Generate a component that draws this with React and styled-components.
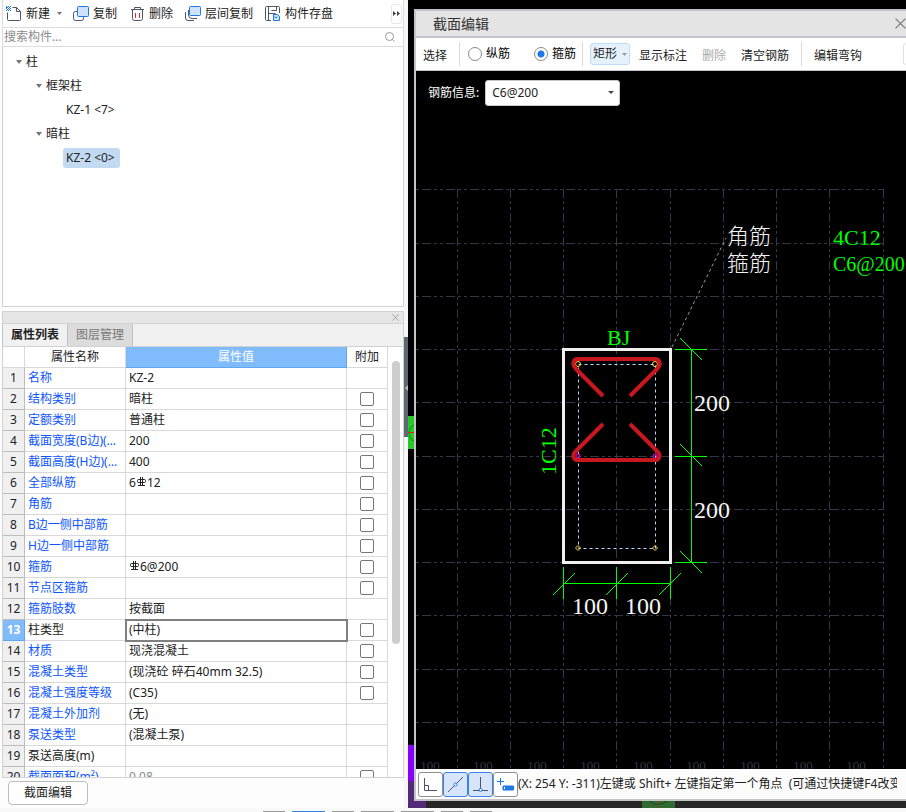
import React, { useState } from "react";
import styled, { createGlobalStyle, css } from "styled-components";

const GlobalStyle = createGlobalStyle`
  * { box-sizing: border-box; }
  body {
    margin: 0;
    background: #fff;
    color: #222;
    font: 12px/20px "Noto Sans", "Noto Sans CJK SC", sans-serif;
    overflow: hidden;
  }
  button, input, select { font: inherit; color: inherit; }
`;

const Page = styled.div`
  display: flex;
  flex-direction: column;
  height: 100vh;
`;

const Workspace = styled.main`
  display: flex;
  flex: 1;
  min-height: 0;
`;

const Sidebar = styled.aside`
  display: flex;
  flex: 0 0 404px;
  flex-direction: column;
  padding-left: 2px;
  background: #fdfdfd;
`;

const Toolbar = styled.div`
  display: flex;
  align-items: center;
  height: 28px;
  padding-left: 3px;
  background: #fff;
  border: solid #dcdcdc;
  border-width: 0 1px 1px 1px;
`;

const ToolButton = styled.button`
  display: flex;
  align-items: center;
  gap: 4px;
  margin-right: ${(p) => p.$space}px;
  padding: 0;
  border: 0;
  background: none;
  white-space: nowrap;
`;

const OverflowButton = styled.button`
  display: grid;
  place-items: center;
  width: 11px;
  height: 20px;
  margin-left: auto;
  margin-right: 1px;
  padding: 0;
  border: 1px solid #e6e6e6;
  border-radius: 3px;
  background: #fff;
`;

const SearchBar = styled.label`
  display: flex;
  align-items: center;
  height: 19px;
  padding: 0 8px 0 1px;
  border: solid #dcdcdc;
  border-width: 0 1px 1px 1px;
  background: #fff;
`;

const SearchInput = styled.input`
  flex: 1;
  min-width: 0;
  height: 18px;
  padding: 0;
  border: 0;
  outline: 0;
  background: none;
  &::placeholder { color: #8c8c8c; opacity: 1; }
`;

const Tree = styled.ul`
  flex: 0 0 260px;
  margin: 0;
  padding: 3px 0 0 13px;
  list-style: none;
  border: solid #d2d2d2;
  border-width: 0 1px 1px 1px;
  background: #fff;
`;

const Branch = styled.ul`
  margin: 0;
  padding: 0 0 0 20px;
  list-style: none;
`;

const TreeNode = styled.button`
  display: flex;
  align-items: center;
  gap: 4px;
  height: 24px;
  padding: 0;
  border: 0;
  background: none;
`;

const TreeLeaf = styled.button`
  display: block;
  height: 20px;
  margin: 2px 0 2px 7px;
  padding: 0 5px 0 3px;
  line-height: 20px;
  border: 0;
  border-radius: 3px;
  background: ${(p) => (p.$active ? "#c2daf2" : "none")};
`;

const PanelTitle = styled.div`
  display: flex;
  justify-content: flex-end;
  align-items: center;
  flex: 0 0 12px;
  margin-top: 4px;
  padding-right: 4px;
  background: #e6e6e6;
  border: solid #d2d2d2;
  border-width: 1px 1px 0 1px;
`;

const IconButton = styled.button`
  display: grid;
  place-items: center;
  padding: 0;
  border: 0;
  background: none;
`;

const Tabs = styled.div`
  display: flex;
  flex: 0 0 24px;
  background: #f1f1f1;
  border: solid #d2d2d2;
  border-width: 1px 1px 1px 0;
`;

const Tab = styled.button`
  padding: 0 8px;
  border: solid #c3c3cb;
  border-width: 0 1px 0 ${(p) => (p.$active ? 1 : 0)}px;
  background: ${(p) => (p.$active ? "#f1f1f1" : "#dcdcdc")};
  color: ${(p) => (p.$active ? "#222" : "#777")};
  font-weight: ${(p) => (p.$active ? 600 : 400)};
`;

const PropertyArea = styled.div`
  display: flex;
  flex: 1;
  min-height: 0;
  overflow: hidden;
  border: solid #d2d2d2;
  border-width: 0 1px 1px 1px;
  background: #fff;
`;

const TableWrap = styled.div`
  flex: 1;
  min-width: 0;
`;

const Properties = styled.table`
  width: 100%;
  table-layout: fixed;
  border-collapse: separate;
  border-spacing: 0;
`;

const cell = css`
  height: 21px;
  overflow: hidden;
  line-height: 20px;
  white-space: nowrap;
  border: solid #d9d9d9;
  border-width: 0 1px 1px 0;
`;

const HeadCell = styled.th`
  ${cell}
  width: ${(p) => (p.$width ? p.$width + "px" : "auto")};
  padding: 0;
  font-weight: 400;
  ${(p) => p.$active && "background: #80bbfb; color: #fff; border-color: #61a5ee;"}
`;

const NumberCell = styled.th`
  ${cell}
  padding: 0;
  font-weight: 400;
  background: #f0f0f0;
  border-color: #bdbdbd;
  ${(p) => p.$active && "background: #80bbfb; color: #fff; border-color: #61a5ee; font-weight: 700;"}
`;

const NameCell = styled.td`
  ${cell}
  padding: 0 3px;
  text-overflow: ellipsis;
  color: ${(p) => (p.$plain ? "#222" : "#0d55ff")};
`;

const ValueCell = styled.td`
  ${cell}
  padding: 0 3px;
  color: ${(p) => (p.$muted ? "#888" : "#222")};
  ${(p) => p.$active && "outline: 2px solid #7f7f7f; outline-offset: -1px;"}
`;

const TickCell = styled.td`
  ${cell}
  padding: 0;
`;

const Tick = styled.input`
  appearance: none;
  display: block;
  width: 14px;
  height: 14px;
  margin: 0 auto;
  border: 1px solid #777;
  border-radius: 2px;
  background: #fff;
  &:checked { background: #2878e0; }
`;

const ScrollTrack = styled.div`
  flex: 0 0 15px;
  padding: 14px 3px 0 4px;
`;

const ScrollThumb = styled.div`
  height: 283px;
  border-radius: 4px;
  background: #cdcdcd;
`;

const SidebarFooter = styled.div`
  flex: 0 0 30px;
  padding: 3px 0 0 6px;
`;

const EditButton = styled.button`
  width: 80px;
  height: 24px;
  padding: 0;
  line-height: 22px;
  border: 1px solid #bcbcbc;
  border-radius: 4px;
  background: #fff;
`;

const Splitter = styled.div`
  display: flex;
  flex: 0 0 4px;
  flex-direction: column;
  padding-top: 337px;
  background: #f6f6f8;
`;

const SplitterHandle = styled.button`
  width: 4px;
  height: 100px;
  padding: 0;
  border: 0;
  background: #5e6875;
`;

const Stage = styled.section`
  position: relative;
  display: flex;
  flex: 1;
  min-width: 0;
  padding: 9px 0 7px 6px;
  background: #000;
`;

const Backdrop = styled.svg`
  position: absolute;
  inset: 0;
  width: 100%;
  height: 100%;
`;

const Dialog = styled.section`
  position: relative;
  display: flex;
  flex: 1;
  flex-direction: column;
  min-width: 0;
  border: solid #c3c4c8;
  border-width: 2px 0 2px 2px;
`;

const DialogTitle = styled.header`
  display: flex;
  align-items: center;
  justify-content: space-between;
  flex: 0 0 27px;
  padding-left: 17px;
  background: #e4e4e4;
  border-bottom: 2px solid #c3c3cb;
`;

const Heading = styled.h2`
  margin: 0;
  font-size: 14px;
  font-weight: 400;
  color: #333;
`;

const DialogTools = styled.div`
  display: flex;
  align-items: center;
  flex: 0 0 33px;
  padding: 0 1px 0 7px;
  background: #fff;
  border-bottom: 1px solid #c3c3cb;
  white-space: nowrap;
`;

const TextButton = styled.button`
  padding: 3px 0 0;
  margin-right: ${(p) => p.$space}px;
  border: 0;
  background: none;
  color: ${(p) => (p.disabled ? "#aaa" : "#222")};
`;

const Separator = styled.span`
  width: 1px;
  height: 24px;
  margin-right: ${(p) => p.$space}px;
  background: #dadada;
`;

const RadioLabel = styled.label`
  display: flex;
  align-items: center;
  gap: 4px;
  margin-right: ${(p) => p.$space}px;
  color: #000;
`;

const Radio = styled.input`
  appearance: none;
  width: 14px;
  height: 14px;
  margin: 0;
  border: 1px solid #888;
  border-radius: 50%;
  background: #fff;
  &:checked { background: radial-gradient(circle, #1f78e8 3px, #fff 4px); }
`;

const ShapeButton = styled.button`
  display: flex;
  align-items: center;
  gap: 5px;
  height: 22px;
  margin-right: 9px;
  padding: 0 2px;
  border: 1px solid #bfdcf5;
  border-radius: 3px;
  background: #e5f2fd;
`;

const MoreButton = styled.button`
  width: 8px;
  height: 22px;
  margin: 0 -6px 0 auto;
  padding: 0;
  border: 1px solid #e0e0e0;
  border-radius: 3px;
  background: #fff;
`;

const Canvas = styled.div`
  position: relative;
  flex: 1;
  min-height: 0;
  overflow: hidden;
  background: #000;
`;

const Drawing = styled.svg`
  position: absolute;
  inset: 0;
  width: 100%;
  height: 100%;
`;

const RebarField = styled.label`
  position: relative;
  display: inline-flex;
  align-items: center;
  gap: 6px;
  margin: 9px 0 0 12px;
  color: #fff;
`;

const RebarSelect = styled.select`
  appearance: none;
  width: 135px;
  height: 26px;
  padding: 0 6px;
  border: 1px solid #c9c9c9;
  border-radius: 3px;
  color: #222;
  background: #fff url("data:image/svg+xml,%3Csvg xmlns='http://www.w3.org/2000/svg' width='6' height='4'%3E%3Cpath d='M0 0h6L3 3z' fill='%23444'/%3E%3C/svg%3E") no-repeat right 5px center;
`;

const DialogStatus = styled.footer`
  display: flex;
  align-items: center;
  flex: 0 0 30px;
  padding: 0 9px 0 2px;
  background: #fcfcfc;
  color: #222;
`;

const ModeButton = styled.button`
  display: grid;
  place-items: center;
  flex: 0 0 25px;
  height: 25px;
  padding: 0;
  border: 1px solid ${(p) => (p.$active ? "#3c82e6" : "#8f8f8f")};
  border-radius: 3px;
  background: ${(p) => (p.$active ? "#d6e5fb" : "#fff")};
`;

const Hint = styled.span`
  flex: 1;
  min-width: 0;
  overflow: hidden;
  white-space: nowrap;
`;

const BottomStrip = styled.footer`
  display: flex;
  align-items: flex-end;
  gap: 7px;
  flex: 0 0 4px;
  padding-left: 263px;
  background: #f8f8f8;
`;

const StripItem = styled.span`
  width: ${(p) => p.$width}px;
  height: 1px;
  background: ${(p) => (p.$active ? "#3c82e6" : "#999")};
`;

const RebarMark = styled.svg`
  margin: 0 1px;
  vertical-align: 1px;
`;

const ink = "#4d5566";
const blue = "#1f78e8";

const NewIcon = () => (
  <svg width="16" height="16" viewBox="0 0 16 16" fill="none">
    <path d="M6.500 1.500h4l4 4v8a1 1 0 0 1-1 1h-11a1 1 0 0 1-1-1v-7M10.500 1.500v4h4" stroke={ink} />
    <path d="M0 0h1v1h1v1H0zM2 0h1v1H2zM4 0h1v1H4zM1 1h1v1H1zM3 1h1v1H3zM0 2h1v1H0zM2 2h1v1H2zM4 2h1v1H4zM1 3h1v1H1zM3 3h1v1H3zM0 4h1v1H0zM2 4h1v1H2zM4 4h1v1H4z" fill={blue} />
  </svg>
);

const CopyIcon = () => (
  <svg width="16" height="16" viewBox="0 0 16 16" fill="none">
    <path d="M4 5.500H2.500a2 2 0 0 0-2 2v5a2 2 0 0 0 2 2h6a2 2 0 0 0 2-2V11" stroke={ink} />
    <rect x="4.500" y=".5" width="11" height="10" rx="1" fill="#cfe2fc" stroke={blue} />
  </svg>
);

const TrashIcon = () => (
  <svg width="15" height="16" viewBox="0 0 15 16" fill="none">
    <path d="M1 3.500h13M4.500 3.500v-2h6v2M2.500 3.500v9a2 2 0 0 0 2 2h6a2 2 0 0 0 2-2v-9" stroke={ink} />
    <path d="M5.500 7v5M9.500 7v5" stroke="#d62b35" />
  </svg>
);

const LayersIcon = () => (
  <svg width="16" height="16" viewBox="0 0 16 16" fill="none">
    <path d="M.5 6v6q0 2.500 2.500 2.500h6M3.500 4v5q0 3.500 3.500 3.500h5" stroke={ink} />
    <rect x="4.500" y=".5" width="11" height="9" rx="1" fill="#cfe2fc" stroke={blue} />
  </svg>
);

const SaveIcon = () => (
  <svg width="16" height="16" viewBox="0 0 16 16" fill="none">
    <path d="M6 14.500H1.500a1 1 0 0 1-1-1v-12a1 1 0 0 1 1-1h12a1 1 0 0 1 1 1V7M3.500 .5v14M11.500 .5v4h-5M3.500 7.500h7" stroke={ink} />
    <path d="M8.500 8.500h4l2 2v4h-6z" fill="#cfe2fc" stroke={blue} />
    <path d="M9.500 10.500l1.500 1.500 1.500-1.500" stroke={blue} />
  </svg>
);

const Caret = ({ color = "#777" }) => (
  <svg width="5" height="3" viewBox="0 0 5 3"><path d="M0 0h5L2.500 3z" fill={color} /></svg>
);

const TreeCaret = () => (
  <svg width="6" height="4" viewBox="0 0 6 4"><path d="M0 0h6L3 4z" fill="#777" /></svg>
);

const SearchIcon = () => (
  <svg width="10" height="10" viewBox="0 0 10 10" fill="none" stroke="#999">
    <circle cx="4.500" cy="4.500" r="4" /><path d="M7.500 7.500l2 2" />
  </svg>
);

const Cross = ({ size, color }) => (
  <svg width={size} height={size} viewBox="0 0 10 10"><path d="M.5 .5l9 9M9.500 .5l-9 9" stroke={color} /></svg>
);

const RebarSymbol = () => (
  <RebarMark width="9" height="9" viewBox="0 0 9 9" fill="none" stroke="#222">
    <path d="M3.500 0v8M5.500 0v8M1 8.500h7" />
    <rect x=".5" y="2.500" width="8" height="3" rx="1" />
  </RebarMark>
);

const rows = [
  ["名称", "KZ-2", false],
  ["结构类别", "暗柱", true],
  ["定额类别", "普通柱", true],
  ["截面宽度(B边)(mm)", "200", true],
  ["截面高度(H边)(mm)", "400", true],
  ["全部纵筋", <>6<RebarSymbol />12</>, true],
  ["角筋", "", true],
  ["B边一侧中部筋", "", true],
  ["H边一侧中部筋", "", true],
  ["箍筋", <><RebarSymbol />6@200</>, true],
  ["节点区箍筋", "", true],
  ["箍筋肢数", "按截面", false],
  ["柱类型", "(中柱)", true],
  ["材质", "现浇混凝土", true],
  ["混凝土类型", "(现浇砼 碎石40mm 32.5)", true],
  ["混凝土强度等级", "(C35)", true],
  ["混凝土外加剂", "(无)", false],
  ["泵送类型", "(混凝土泵)", false],
  ["泵送高度(m)", "", false],
  ["截面面积(m²)", "0.08", true],
];
const plainRows = [13, 19];

const gridX = [41, 94, 147, 200, 254, 307, 360, 413, 467];
const gridY = [118, 172, 225, 278, 331, 385, 438, 491, 544, 598, 651];

function SectionDrawing() {
  return (
    <Drawing>
      <g stroke="#333845" strokeDasharray="9 3 3 3 3 3" shapeRendering="crispEdges">
        {gridY.map((y) => <path key={y} d={`M0 ${y}.5H467`} strokeDashoffset="18" />)}
        {gridX.map((x) => <path key={x} d={`M${x}.5 118V697`} />)}
      </g>
      <g fill="#333845" fontFamily="Liberation Serif, serif" fontSize="13" textAnchor="middle">
        {[14, 67, 121, 174, 227, 280, 334, 387, 440].map((x) => <text key={x} x={x} y="699">100</text>)}
      </g>
      <path d="M256 276L310 167" stroke="#999" strokeDasharray="3 3" fill="none" />
      <rect x="147.500" y="278.500" width="107" height="213" fill="none" stroke="#f0f0f0" strokeWidth="3" />
      <rect x="162.500" y="293.500" width="77" height="184" fill="none" stroke="#b9d4ff" strokeDasharray="3 3" />
      <g fill="none" stroke="#ffd93b">
        <circle cx="162" cy="293" r="2.500" />
        <circle cx="239" cy="293" r="2.500" />
        <path d="M162 474.500l2.500 2.500-2.500 2.500-2.500-2.500zM239 474.500l2.500 2.500-2.500 2.500-2.500-2.500z" />
      </g>
      <g fill="none" stroke="#f0f">
        <circle cx="162" cy="385" r="2" />
        <circle cx="239" cy="385" r="2" />
      </g>
      <g fill="none" stroke="#c8171e" strokeWidth="4" strokeLinejoin="round">
        <path d="M187 325L160 298Q156 293 158 290Q159 288 162 288H239Q242 288 243 290Q245 294 241 298L214 325" />
        <path d="M187 353L160 380Q156 384 158 387Q159 389 162 389H239Q242 389 243 387Q245 384 241 380L214 353" />
      </g>
      <g stroke="#0f0" fill="none">
        <path d="M275.500 278V491M259 278.500H291M259 385.500H291M259 491.500H291M147.500 496V528M200.500 496V528M254.500 496V528M147 512.500H255" />
        <path d="M264 267l22 22M264 373l22 22M264 480l22 22M137 524l22-22M190 524l22-22M243 524l22-22" />
      </g>
      <g fill="#f4f4f4" fontFamily="Liberation Serif, serif" fontSize="24">
        <text x="278" y="340">200</text>
        <text x="278" y="447">200</text>
        <text x="156" y="543">100</text>
        <text x="209" y="543">100</text>
      </g>
      <g fill="#f4f4f4" fontFamily="Liberation Serif, Noto Sans CJK SC, sans-serif" fontWeight="300" fontSize="22">
        <text x="311" y="173">角筋</text>
        <text x="311" y="200">箍筋</text>
      </g>
      <g fill="#0f0" fontFamily="Liberation Serif, serif" fontSize="22">
        <text x="417" y="174">4C12</text>
        <text x="417" y="200" fontSize="20">C6@200</text>
        <text x="191" y="274">BJ</text>
        <text transform="translate(140 404) rotate(-90)">1C12</text>
      </g>
    </Drawing>
  );
}

function PropertyRow({ index, row: [name, value, tick] }) {
  const active = index === 13;
  return (
    <tr>
      <NumberCell scope="row" $active={active}>{index}</NumberCell>
      <NameCell $plain={plainRows.includes(index)}>{name}</NameCell>
      <ValueCell $active={active} $muted={index === 20}>{value}</ValueCell>
      <TickCell>{tick && <Tick type="checkbox" aria-label={name} />}</TickCell>
    </tr>
  );
}

export default function App() {
  const [kind, setKind] = useState("stirrup");
  return (
    <Page>
      <GlobalStyle />
      <Workspace>
        <Sidebar>
          <Toolbar>
            <ToolButton $space={7}><NewIcon />新建</ToolButton>
            <ToolButton $space={11} aria-label="新建选项"><Caret /></ToolButton>
            <ToolButton $space={13}><CopyIcon />复制</ToolButton>
            <ToolButton $space={12}><TrashIcon />删除</ToolButton>
            <ToolButton $space={12}><LayersIcon />层间复制</ToolButton>
            <ToolButton $space={0}><SaveIcon />构件存盘</ToolButton>
            <OverflowButton aria-label="更多">
              <svg width="7" height="5" viewBox="0 0 7 5"><path d="M0 0l3 2.500L0 5zM4 0l3 2.500L4 5z" fill="#444" /></svg>
            </OverflowButton>
          </Toolbar>
          <SearchBar>
            <SearchInput placeholder="搜索构件..." aria-label="搜索构件" />
            <SearchIcon />
          </SearchBar>
          <Tree>
            <li>
              <TreeNode><TreeCaret />柱</TreeNode>
              <Branch>
                <li>
                  <TreeNode><TreeCaret />框架柱</TreeNode>
                  <Branch><li><TreeLeaf>KZ-1 &lt;7&gt;</TreeLeaf></li></Branch>
                </li>
                <li>
                  <TreeNode><TreeCaret />暗柱</TreeNode>
                  <Branch><li><TreeLeaf $active>KZ-2 &lt;0&gt;</TreeLeaf></li></Branch>
                </li>
              </Branch>
            </li>
          </Tree>
          <PanelTitle>
            <IconButton aria-label="关闭属性"><Cross size={7} color="#888" /></IconButton>
          </PanelTitle>
          <Tabs>
            <Tab $active>属性列表</Tab>
            <Tab>图层管理</Tab>
          </Tabs>
          <PropertyArea>
            <TableWrap>
              <Properties>
                <thead>
                  <tr>
                    <HeadCell $width={22} />
                    <HeadCell $width={101}>属性名称</HeadCell>
                    <HeadCell $active>属性值</HeadCell>
                    <HeadCell $width={41}>附加</HeadCell>
                  </tr>
                </thead>
                <tbody>
                  {rows.map((row, i) => <PropertyRow key={i} index={i + 1} row={row} />)}
                </tbody>
              </Properties>
            </TableWrap>
            <ScrollTrack><ScrollThumb /></ScrollTrack>
          </PropertyArea>
          <SidebarFooter><EditButton>截面编辑</EditButton></SidebarFooter>
        </Sidebar>
        <Splitter>
          <SplitterHandle aria-label="收起面板">
            <svg width="4" height="6" viewBox="0 0 4 6"><path d="M4 0v6L1 3z" fill="#bbb" /></svg>
          </SplitterHandle>
        </Splitter>
        <Stage>
          <Backdrop>
            <path d="M0 416h20v33H0z" fill="#27c92b" />
            <circle cx="10" cy="433" r="9" fill="none" stroke="#128216" />
            <path d="M0 432.500h8" stroke="#e02020" />
            <path d="M0 745h18v36H0z" fill="#8500f5" />
            <path d="M0 781h18v27H0z" fill="#522a78" />
            <path d="M18 796h900v12H18z" fill="#262626" />
            <path d="M234 796h33v12h-33z" fill="#2f6b30" />
            <path d="M240 800q10 9 20 0" fill="none" stroke="#1c471c" />
            <path d="M250.500 800v8" stroke="#9b3030" />
          </Backdrop>
          <Dialog>
            <DialogTitle>
              <Heading>截面编辑</Heading>
              <IconButton aria-label="关闭"><Cross size={11} color="#777" /></IconButton>
            </DialogTitle>
            <DialogTools>
              <TextButton $space={12}>选择</TextButton>
              <Separator $space={8} />
              <RadioLabel $space={24}>
                <Radio type="radio" name="kind" checked={kind === "main"} onChange={() => setKind("main")} />纵筋
              </RadioLabel>
              <RadioLabel $space={6}>
                <Radio type="radio" name="kind" checked={kind === "stirrup"} onChange={() => setKind("stirrup")} />箍筋
              </RadioLabel>
              <Separator $space={7} />
              <ShapeButton>矩形<Caret color="#999" /></ShapeButton>
              <TextButton $space={15}>显示标注</TextButton>
              <TextButton $space={15} disabled>删除</TextButton>
              <TextButton $space={12}>清空钢筋</TextButton>
              <Separator $space={12} />
              <TextButton $space={0}>编辑弯钩</TextButton>
              <MoreButton aria-label="更多工具" />
            </DialogTools>
            <Canvas>
              <SectionDrawing />
              <RebarField>
                钢筋信息:
                <RebarSelect defaultValue="C6@200"><option>C6@200</option></RebarSelect>
              </RebarField>
            </Canvas>
            <DialogStatus>
              <ModeButton aria-label="正交">
                <svg width="15" height="15" viewBox="0 0 15 15" fill="none" stroke={ink}><path d="M1.500 1v12.500H14M1.500 8.500h4v5" /></svg>
              </ModeButton>
              <ModeButton $active aria-label="中点">
                <svg width="15" height="15" viewBox="0 0 15 15" fill="none" stroke={ink}><path d="M0 15L15 0" /><circle cx="7.500" cy="7.500" r="1.500" fill="#fff" stroke={blue} /></svg>
              </ModeButton>
              <ModeButton $active aria-label="垂点">
                <svg width="15" height="15" viewBox="0 0 15 15" fill="none" stroke={ink}><path d="M7.500 0v13M0 13.500h15" /><circle cx="7.500" cy="13" r="1.500" fill="#fff" stroke={blue} /></svg>
              </ModeButton>
              <ModeButton aria-label="动态输入">
                <svg width="17" height="15" viewBox="0 0 17 15" fill="none" stroke={blue}><path d="M0 4.500h7M3.500 1v7" /><path d="M6 9h10.500v4H6z" fill={blue} /><path d="M7.500 10v2" stroke="#fff" /></svg>
              </ModeButton>
              <Hint>(X: 254 Y: -311)左键或 Shift+ 左键指定第一个角点&nbsp; (可通过快捷键F4改变</Hint>
            </DialogStatus>
          </Dialog>
        </Stage>
      </Workspace>
      <BottomStrip>
        <StripItem $width={22} />
        <StripItem $width={33} $active />
        <StripItem $width={22} />
        <StripItem $width={33} />
        <StripItem $width={33} />
        <StripItem $width={22} />
        <StripItem $width={22} />
      </BottomStrip>
    </Page>
  );
}
